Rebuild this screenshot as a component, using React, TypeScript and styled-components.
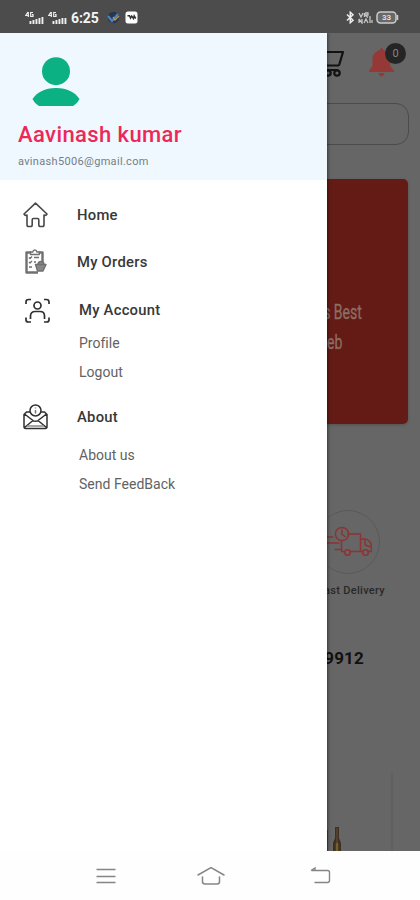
import React from "react";
import styled, { createGlobalStyle } from "styled-components";

const Global = createGlobalStyle`
  *{box-sizing:border-box}
  body{margin:0;font-family:Roboto,"Liberation Sans",sans-serif;background:#fff}
  svg{display:block;flex:none}
`;

const Screen = styled.div`
  width: 420px; height: 900px; display: flex; flex-direction: column;
  overflow: hidden; background: #fff;
`;
const StatusBar = styled.header`
  height: 33px; flex: none; background: #4c4c4c; color: #f4f4f4;
  display: flex; align-items: center; justify-content: space-between;
  padding: 2px 21px 0 25px;
`;
const StatusGroup = styled.div<{ $gap: number }>`
  display: flex; align-items: center; gap: ${p => p.$gap}px;
`;
const Clock = styled.span`
  font-size: 14px; line-height: 16px; font-weight: 700; width: 28px; margin-right: 5px;
  letter-spacing: -0.1px; white-space: nowrap;
`;
const AppIcons = styled.div`display: flex; gap: 5px;`;
const Body = styled.main`
  position: relative; height: 818px; flex: none; overflow: hidden;
`;

/* Dimmed shop page */
const Page = styled.div`
  height: 100%; background: #666; display: flex; flex-direction: column;
  align-items: flex-end; color: #111;
`;
const TopBar = styled.div`
  height: 70px; flex: none; display: flex; padding: 9px 14px 0 0; gap: 23px;
`;
const BellBox = styled.div`position: relative; width: 38px; height: 38px;`;
const Badge = styled.span`
  position: absolute; right: 0; top: 1px; width: 21px; height: 21px; border-radius: 50%;
  background: #252525; color: #858585; font-size: 11px; line-height: 21px; text-align: center;
`;
const Search = styled.div`
  width: 398px; height: 42px; flex: none; margin-right: 11px;
  border: 1px solid #4b4b4b; border-radius: 13px;
`;
const Banner = styled.section`
  width: 396px; height: 245px; flex: none; margin: 34px 12px 0 0; border-radius: 5px;
  background: #651b15; box-shadow: 0 1px 3px #4448; padding-top: 118px;
  display: flex; flex-direction: column; align-items: flex-end;
  color: #8c6e66; font-size: 20px; line-height: 30px;
`;
const BannerLine = styled.span<{ $right: number }>`
  margin-right: ${p => p.$right}px; transform: scaleX(.7); transform-origin: right;
  -webkit-text-stroke: .3px #8c6e66;
`;
const Feature = styled.section`
  width: 74px; margin: 86px 35px 0 0; display: flex; flex-direction: column; align-items: center;
`;
const FeatureCircle = styled.div`
  width: 64px; height: 64px; border-radius: 50%; border: 1px solid #5a5a5a;
  display: flex; align-items: center; justify-content: center;
`;
const FeatureLabel = styled.span`
  margin-top: 9px; font-size: 11px; line-height: 16px; font-weight: 500; color: #292929;
  letter-spacing: .3px; white-space: nowrap; align-self: flex-end;
`;
const Phone = styled.div`
  margin: 48px 56px 0 0; font-size: 17px; line-height: 22px; font-weight: 700; letter-spacing: .2px;
`;
const ProductRow = styled.div`
  margin-top: auto; width: 100%; height: 78px; display: flex; justify-content: flex-end;
  align-items: flex-end;
`;
const ProductCard = styled.div`
  width: 110px; height: 78px; border-right: 2px solid #606060; margin-right: 27px;
  display: flex; align-items: flex-end; padding-left: 43px;
`;

/* Drawer lies over the page */
const Drawer = styled.aside`
  position: absolute; left: 0; top: 0; width: 327px; height: 100%;
  background: #fff; box-shadow: 1px 0 3px #0007;
`;
const Profile = styled.div`
  height: 147px; background: #eff8ff; padding: 24px 18px 0;
`;
const Avatar = styled.div`padding-left: 14px;`;
const Name = styled.h1`
  margin: 15px 0 0; font-size: 22px; line-height: 26px; font-weight: 500;
  color: #ed2859; letter-spacing: .4px; white-space: nowrap;
`;
const Email = styled.p`
  margin: 7px 0 0; font-size: 11px; line-height: 14px; color: #777d83; letter-spacing: .32px;
`;
const Menu = styled.nav`padding: 11px 22px;`;
const Item = styled.div<{ $h: number; $shift?: number }>`
  height: ${p => p.$h}px; padding-left: ${p => p.$shift ?? 0}px; display: flex; align-items: center; gap: 28px;
  font-size: 14.8px; font-weight: 500; color: #383838; letter-spacing: .25px;
`;
const SubList = styled.div<{ $top: number; $bottom: number }>`
  margin-top: ${p => p.$top}px; padding: 0 0 ${p => p.$bottom}px 57px;
`;
const SubItem = styled.div`
  font-size: 14px; line-height: 28.5px; color: #626262; letter-spacing: .02px;
`;

const NavBar = styled.footer`
  height: 49px; flex: none; background: #fefefe; display: flex; align-items: center;
  padding: 1px 0 0 95px;
`;
const NavButton = styled.div<{ $gap: number }>`margin-right: ${p => p.$gap}px;`;

const Signal = ({ bars }: { bars: number }) => (
  <svg width="20" height="14" viewBox="0 0 20 14" fill="#eee">
    <path d="M3 1 .7 4.5H4M3.3 1v5M8 1.5H5.7v4H8V3.7H7" fill="none" stroke="#eee" strokeWidth="1.2" />
    {[5, 8, 11, 14, 17].map((x, i) => (
      <rect key={x} x={x - 0.5} y={i < bars ? 10 - i : 7} width="1.9" height={i < bars ? 3 + i : 6} />
    ))}
  </svg>
);

const BirdApp = () => (
  <svg width="13" height="13" viewBox="0 0 13 13">
    <circle cx="6.5" cy="6.5" r="5.8" fill="#2b3550" />
    <path d="m1 5 4 5 6-7" fill="none" stroke="#4a83bd" strokeWidth="2.2" />
    <path d="m6 6 2 3 4-4" fill="none" stroke="#b99b54" strokeWidth="1.3" />
  </svg>
);

const WaveApp = () => (
  <svg width="13" height="13" viewBox="0 0 13 13">
    <rect x=".5" y=".5" width="12" height="12" rx="2.5" fill="#fff" />
    <path d="M2.5 4.7h2l1 2.3 1.2-2L8.5 7.500l.7-2.500 1.500 2.500" fill="none" stroke="#333" strokeWidth="1.5" />
  </svg>
);

const Bluetooth = () => (
  <svg width="9" height="13" viewBox="0 0 9 13" fill="none" stroke="#eee" strokeWidth="1.5">
    <path d="m1 3.5 6 5.7-2.700 2.500V1.300L7 3.800 1 9.500" />
  </svg>
);

const NetSpeed = () => (
  <svg width="15" height="12" viewBox="0 0 15 12" fill="none" stroke="#c5c5c5" strokeWidth="1.3">
    <path d="m1 1 2 4 2-4M6.500 1v4M7 1h3v2H7l3 2.500M1 7v4m0-4 3 4V7m2 4 2-4 2 4M12 4v7M14 8v3" />
  </svg>
);

const Battery = () => (
  <svg width="23" height="13" viewBox="0 0 23 13">
    <rect x="1" y="1" width="19" height="11" rx="3.5" fill="#686868" stroke="#ccc" strokeWidth="1.5" />
    <path d="M21.500 4v5" stroke="#ccc" strokeWidth="1.5" />
    <text x="10.500" y="9.300" textAnchor="middle" fontSize="8" fontWeight="700" fill="#ddd" fontFamily="Roboto">33</text>
  </svg>
);

const Cart = () => (
  <svg width="34" height="36" viewBox="0 0 34 36" fill="none" stroke="#121212" strokeWidth="2.200" strokeLinejoin="round">
    <path d="M2 5h5l4 18.500h17M8 10h24l-4 13.500M11 23.500l2 4.500h14" />
    <circle cx="17" cy="31" r="2.700" fill="#666" /><circle cx="26" cy="31" r="2.700" fill="#666" />
  </svg>
);

const Bell = () => (
  <svg width="38" height="38" viewBox="0 0 38 38" fill="#963936">
    <path d="M13.500 6c1 0 1.400.9 1.600 2 4.500 1.300 7 5 7 9.500v6.500L26 28.500v1.500H1v-1.500L4.500 24v-6.500C4.500 13 7 9.300 11.900 8c.2-1.100.6-2 1.600-2Z" />
    <path d="M10.500 31h6c-.5 2.300-1.500 3.500-3 3.500s-2.500-1.200-3-3.500Z" />
  </svg>
);

const Truck = () => (
  <svg width="48" height="32" viewBox="0 0 48 32" fill="none" stroke="#8d3333" strokeWidth="1.500" strokeLinejoin="round" strokeLinecap="round">
    <circle cx="18" cy="8" r="6.600" />
    <path d="M18 4v4.500l3 2M24 8h12.500v17.500H26M17.500 15v10.500H20M37 13h4c3.500 0 6.500 4 6.500 7.500v5H44M41 13.500v5.500l6 2M2 11h7M1 17h14M11 23.500h6M26 25.500h13" />
    <circle cx="23.500" cy="26.500" r="2.800" /><circle cx="41.500" cy="26.500" r="2.800" />
  </svg>
);

const Bottles = () => (
  <svg width="17" height="26" viewBox="0 0 17 26">
    <path d="M1 5v21" stroke="#484239" strokeWidth="2" />
    <path d="M0 17h2v9H0Z" fill="#5a4b20" />
    <path d="M9 2h4v11l2 5v8H7v-8l2-5Z" fill="#40301e" />
    <path d="M11 3v15" stroke="#625044" /><path d="M11 18v8" stroke="#73602e" strokeWidth="2.500" />
  </svg>
);

const Person = () => (
  <svg width="48" height="50" viewBox="0 0 48 50" fill="#0bb083">
    <circle cx="24" cy="14.200" r="14" />
    <path d="M.5 42C5.500 35 12.500 31 24 31s18.500 4 23.500 11c-1.500 3-3.500 5-6.500 7H7c-3-2-5-4-6.500-7Z" />
  </svg>
);

const HomeIcon = () => (
  <svg width="27" height="27" viewBox="0 0 27 27" fill="none" stroke="#484848" strokeWidth="1.600" strokeLinecap="round" strokeLinejoin="round">
    <path d="M13.500 2.200 2 13c.7 1.300 1.800 1.600 3 1v9.700c0 1.200.7 1.800 1.700 1.800h1.800c1 0 1.700-.6 1.700-1.800V19c0-1 .3-1.500 1-1.500h4.600c.7 0 1 .5 1 1.500v4.700c0 1.200.7 1.800 1.700 1.800h1.800c1 0 1.700-.6 1.700-1.800V14c1.200.6 2.300.3 3-1Z" />
  </svg>
);

const OrdersIcon = () => (
  <svg width="27" height="27" viewBox="0 0 27 27" fill="none" stroke="#707070" strokeWidth="1.400" strokeLinejoin="round">
    <path d="M9 4.500H4.500V24.500H16M17 4.500h3.500v10" strokeWidth="2.400" />
    <path d="M8.500 6.500V4h2.300C11 2.500 12 2 12.800 2s1.900.5 2.200 2h2.300v2.500Z" />
    <path d="m7 9.500 1 1 2-2M12 9.500h5M7 14l1 1 2-2M12 14h2M7 19h3" />
    <path d="M13.500 16.500h10.500L21 23h-5.500ZM16 16.500c0-4 6-4 6 0" fill="#888" strokeWidth="1.400" />
  </svg>
);

const AccountIcon = () => (
  <svg width="27" height="27" viewBox="0 0 27 27" fill="none" stroke="#303030" strokeWidth="1.700">
    <path d="M2 7V5C2 3.500 2.800 2.500 4.500 2.500H7M20 2.500h2.500C24.200 2.500 25 3.500 25 5v2M2 20.500V23c0 1.500.8 2 2.500 2H7M20 25h2.500c1.700 0 2.500-.5 2.500-2v-2.500" />
    <circle cx="13.500" cy="8.500" r="3.500" />
    <path d="M6.500 22v-3.200c0-3 2-4.300 4.500-4.300h5c2.500 0 4.500 1.300 4.500 4.300V22" />
  </svg>
);

const MailIcon = () => (
  <svg width="27" height="27" viewBox="0 0 27 27" fill="none" stroke="#303030" strokeWidth="1.500" strokeLinejoin="round">
    <path d="M8 9H4.500L2 11.500v12C2 24.500 2.700 25.500 3.500 25.500h20c.8 0 1.500-1 1.500-2v-12L22.500 9H19M2.500 11l8.500 6.500c1.500 1 3.500 1 5 0L24.500 11M2.500 24.500l8.500-7M24.500 24.500l-8.500-7" />
    <path d="M5 23h17" stroke="#888" />
    <circle cx="13.500" cy="7.500" r="5.500" />
    <path d="M13.500 7v3.500M13.500 4.500v1" stroke="#777" />
  </svg>
);

const Recents = () => (
  <svg width="22" height="20" viewBox="0 0 22 20" stroke="#858585" strokeWidth="1.400">
    <path d="M1.500 3.500h19M1.500 10.500h19M1.500 16.500h19" />
  </svg>
);
const HomeNav = () => (
  <svg width="28" height="22" viewBox="0 0 28 22" fill="none" stroke="#858585" strokeWidth="1.500" strokeLinecap="round">
    <path d="M1 10 14 2.500 27 10M5.500 12v4.500c0 1.700.8 2.500 2.500 2.500h12c1.700 0 2.500-.8 2.500-2.500V12" />
  </svg>
);
const Back = () => (
  <svg width="22" height="20" viewBox="0 0 22 20" fill="none" stroke="#858585" strokeWidth="1.400">
    <path d="M1.500 4.500h16c1.400 0 2 .6 2 2v8c0 1.400-.6 2-2 2h-13M1 4.500l4-2.500v2.500" />
  </svg>
);

export default function App() {
  return (
    <Screen>
      <Global />
      <StatusBar>
        <StatusGroup $gap={3}>
          <Signal bars={5} />
          <Signal bars={3} />
          <Clock>6:25</Clock>
          <AppIcons><BirdApp /><WaveApp /></AppIcons>
        </StatusGroup>
        <StatusGroup $gap={3}>
          <Bluetooth />
          <NetSpeed />
          <Battery />
        </StatusGroup>
      </StatusBar>
      <Body>
        <Page>
          <TopBar>
            <Cart />
            <BellBox><Bell /><Badge>0</Badge></BellBox>
          </TopBar>
          <Search />
          <Banner>
            <BannerLine $right={46}>India's Best</BannerLine>
            <BannerLine $right={66}>Web</BannerLine>
          </Banner>
          <Feature>
            <FeatureCircle><Truck /></FeatureCircle>
            <FeatureLabel>Fast Delivery</FeatureLabel>
          </Feature>
          <Phone>9912</Phone>
          <ProductRow>
            <ProductCard><Bottles /></ProductCard>
          </ProductRow>
        </Page>
        <Drawer>
          <Profile>
            <Avatar><Person /></Avatar>
            <Name>Aavinash kumar</Name>
            <Email>avinash5006@gmail.com</Email>
          </Profile>
          <Menu>
            <Item $h={47}><HomeIcon />Home</Item>
            <Item $h={47}><OrdersIcon />My Orders</Item>
            <Item $h={50} $shift={2}><AccountIcon />My Account</Item>
            <SubList $top={-6} $bottom={7}>
              <SubItem>Profile</SubItem>
              <SubItem>Logout</SubItem>
            </SubList>
            <Item $h={47}><MailIcon />About</Item>
            <SubList $top={1} $bottom={0}>
              <SubItem>About us</SubItem>
              <SubItem>Send FeedBack</SubItem>
            </SubList>
          </Menu>
        </Drawer>
      </Body>
      <NavBar>
        <NavButton $gap={80}><Recents /></NavButton>
        <NavButton $gap={85}><HomeNav /></NavButton>
        <NavButton $gap={0}><Back /></NavButton>
      </NavBar>
    </Screen>
  );
}
